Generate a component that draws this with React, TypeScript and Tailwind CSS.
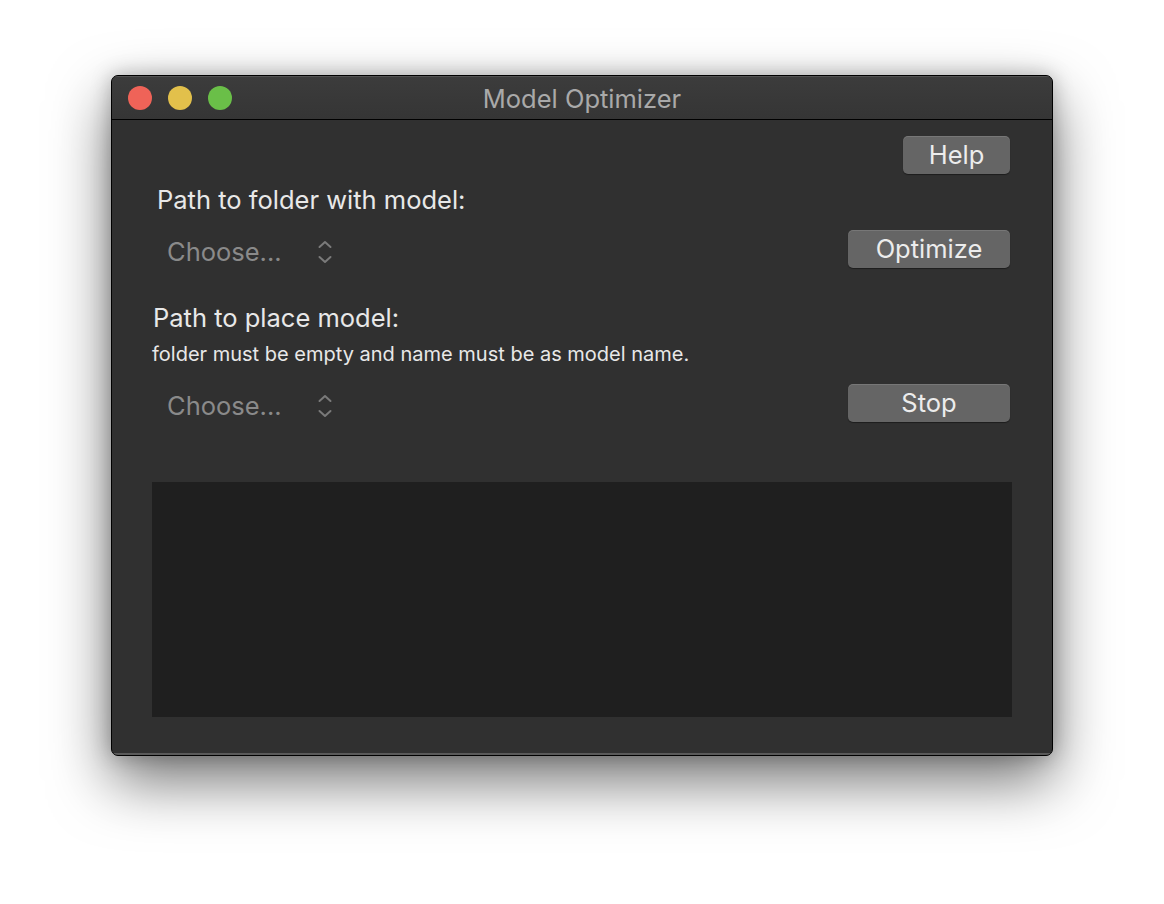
import React from "react";

const Chevrons: React.FC = () => (
  <svg width="16" height="26" viewBox="0 0 16 26" fill="none" stroke="#7a7a7a" strokeWidth="2" strokeLinecap="round" strokeLinejoin="round">
    <path d="M2.5 8 L8 3 L13.5 8" />
    <path d="M2.5 18 L8 23 L13.5 18" />
  </svg>
);

const PopUp: React.FC = () => (
  <div className="flex items-center h-[38px] pl-[15px] pt-[6px]">
    <span className="text-[25.5px] text-[#8a8a8a] w-[150px]">Choose...</span>
    <Chevrons />
  </div>
);

const MacButton: React.FC<{ label: string; className?: string }> = ({ label, className }) => (
  <button
    type="button"
    className={
      "h-[38px] rounded-[5px] bg-[#656565] text-[25.5px] text-[#ececec] shadow-[inset_0_1px_0_rgba(255,255,255,0.12),0_1px_1px_rgba(0,0,0,0.4)] flex items-center justify-center " +
      (className || "")
    }
  >
    {label}
  </button>
);

const App: React.FC = () => {
  return (
    <div
      className="w-[1164px] h-[904px] bg-white flex justify-center pt-[75px]"
      style={{ fontFamily: "Inter, 'Noto Sans', sans-serif" }}
    >
      <div className="w-[942px] h-[681px] rounded-[7px] border border-black bg-[#303030] shadow-[0_25px_60px_rgba(0,0,0,0.55),0_0_20px_rgba(0,0,0,0.25)] overflow-hidden flex flex-col">
        {/* title bar */}
        <div className="relative h-[44px] shrink-0 bg-gradient-to-b from-[#3c3c3c] to-[#353535] border-b border-black flex items-center shadow-[inset_0_1px_0_rgba(255,255,255,0.12)]">
          <div className="flex items-center gap-[16px] pl-[16px]">
            <span className="w-[24px] h-[24px] rounded-full bg-[#ef6358]" />
            <span className="w-[24px] h-[24px] rounded-full bg-[#e2c04b]" />
            <span className="w-[24px] h-[24px] rounded-full bg-[#6abf48]" />
          </div>
          <div className="absolute inset-0 flex items-center justify-center pt-[3px] text-[25.5px] text-[#a9a9a9]">
            Model Optimizer
          </div>
        </div>

        {/* content */}
        <div className="flex-1 flex flex-col pl-[40px] pr-[40px] pb-[36px] border-b-2 border-[#5a5a5a]">
          <div className="flex justify-end mt-[16px]">
            <MacButton label="Help" className="w-[107px] mr-[2px]" />
          </div>

          <div className="pl-[5px] mt-[11px] text-[25.5px] leading-[30px] text-[#e8e8e8]">
            Path to folder with model:
          </div>

          <div className="flex items-center justify-between mt-[15px]">
            <PopUp />
            <MacButton label="Optimize" className="w-[162px] mr-[2px]" />
          </div>

          <div className="pl-[1px] mt-[35px] text-[25.5px] leading-[30px] text-[#e8e8e8]">
            Path to place model:
          </div>
          <div className="text-[20px] leading-[24px] mt-[9px] text-[#e8e8e8]">
            folder must be empty and name must be as model name.
          </div>

          <div className="flex items-center justify-between mt-[18px]">
            <PopUp />
            <MacButton label="Stop" className="w-[162px] mr-[2px]" />
          </div>

          <div className="mt-[60px] flex-1 bg-[#1f1f1f]" />
        </div>
      </div>
    </div>
  );
};

export default App;
